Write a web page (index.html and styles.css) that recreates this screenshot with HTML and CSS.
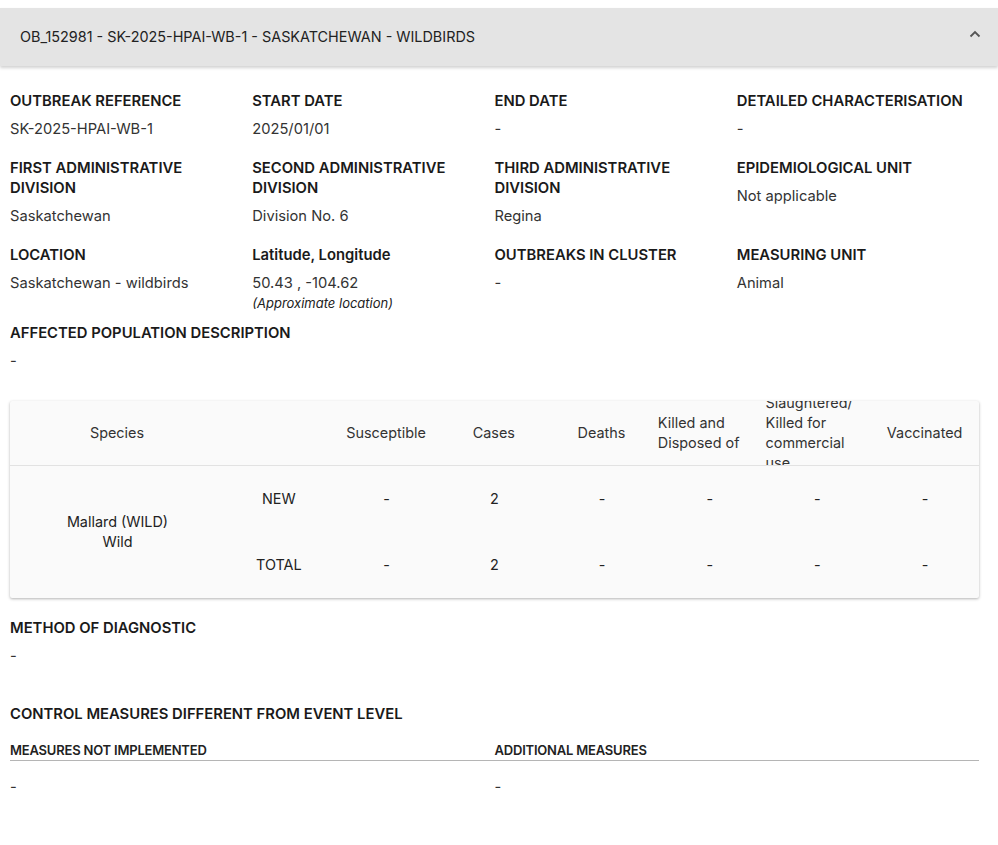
FILE: index.html
```html
<!DOCTYPE html>
<html lang="en">
<head>
  <meta charset="UTF-8">
  <meta name="viewport" content="width=device-width, initial-scale=1.0">
  <title>OB_152981 - Outbreak details</title>
  <link rel="stylesheet" href="styles.css">
</head>
<body>
  <div class="panel">
    <div class="panel-header">
      <span class="panel-title">OB_152981 - SK-2025-HPAI-WB-1 - SASKATCHEWAN - WILDBIRDS</span>
      <svg class="chevron" width="12" height="8" viewBox="0 0 12 8">
        <polyline points="1.5,6.5 6,2 10.5,6.5" fill="none" stroke="#555" stroke-width="1.8"/>
      </svg>
    </div>

    <div class="panel-body">
      <div class="fields">
        <div class="field">
          <div class="label">OUTBREAK REFERENCE</div>
          <div class="value">SK-2025-HPAI-WB-1</div>
        </div>
        <div class="field">
          <div class="label">START DATE</div>
          <div class="value">2025/01/01</div>
        </div>
        <div class="field">
          <div class="label">END DATE</div>
          <div class="value">-</div>
        </div>
        <div class="field">
          <div class="label">DETAILED CHARACTERISATION</div>
          <div class="value">-</div>
        </div>

        <div class="field">
          <div class="label">FIRST ADMINISTRATIVE DIVISION</div>
          <div class="value">Saskatchewan</div>
        </div>
        <div class="field">
          <div class="label">SECOND ADMINISTRATIVE DIVISION</div>
          <div class="value">Division No. 6</div>
        </div>
        <div class="field">
          <div class="label">THIRD ADMINISTRATIVE DIVISION</div>
          <div class="value">Regina</div>
        </div>
        <div class="field">
          <div class="label">EPIDEMIOLOGICAL UNIT</div>
          <div class="value">Not applicable</div>
        </div>

        <div class="field">
          <div class="label">LOCATION</div>
          <div class="value">Saskatchewan - wildbirds</div>
        </div>
        <div class="field">
          <div class="label">Latitude, Longitude</div>
          <div class="value">50.43 , -104.62</div>
          <div class="note">(Approximate location)</div>
        </div>
        <div class="field">
          <div class="label">OUTBREAKS IN CLUSTER</div>
          <div class="value">-</div>
        </div>
        <div class="field">
          <div class="label">MEASURING UNIT</div>
          <div class="value">Animal</div>
        </div>
      </div>

      <div class="section first">
        <div class="label">AFFECTED POPULATION DESCRIPTION</div>
        <div class="value">-</div>
      </div>

      <div class="species-table">
        <div class="th">Species</div>
        <div class="th"></div>
        <div class="th">Susceptible</div>
        <div class="th">Cases</div>
        <div class="th">Deaths</div>
        <div class="th">Killed and Disposed of</div>
        <div class="th">Slaughtered/ Killed for commercial use</div>
        <div class="th">Vaccinated</div>

        <div class="td species">Mallard (WILD)<br>Wild</div>
        <div class="td">NEW</div>
        <div class="td">-</div>
        <div class="td">2</div>
        <div class="td">-</div>
        <div class="td">-</div>
        <div class="td">-</div>
        <div class="td">-</div>

        <div class="td">TOTAL</div>
        <div class="td">-</div>
        <div class="td">2</div>
        <div class="td">-</div>
        <div class="td">-</div>
        <div class="td">-</div>
        <div class="td">-</div>
      </div>

      <div class="section diagnostic">
        <div class="label">METHOD OF DIAGNOSTIC</div>
        <div class="value">-</div>
      </div>

      <div class="section measures">
        <div class="label">CONTROL MEASURES DIFFERENT FROM EVENT LEVEL</div>
        <div class="measures-grid">
          <div class="mh">MEASURES NOT IMPLEMENTED</div>
          <div class="mh">ADDITIONAL MEASURES</div>
          <div class="value">-</div>
          <div class="value">-</div>
        </div>
      </div>
    </div>
  </div>
</body>
</html>
```
FILE: styles.css
```css
body {
  margin: 0;
  font-family: Inter, "Noto Sans", sans-serif;
  color: #222;
  background: #fff;
}

.panel {
  padding-top: 8px;
}

.panel-header {
  height: 58px;
  background-color: #e4e4e4;
  box-shadow: 0 2px 3px rgba(0, 0, 0, 0.18);
  display: flex;
  align-items: center;
  justify-content: space-between;
  padding: 0 17px 0 20px;
}
.panel-title {
  font-size: 14.4px;
  color: #222;
  padding-bottom: 2px;
}
.chevron {
  margin-bottom: 7px;
}

.panel-body {
  padding: 25px 19px 40px 10px;
}

.fields {
  display: grid;
  grid-template-columns: repeat(4, 1fr);
  row-gap: 19px;
}
.field {
  padding-right: 10px;
}

.label {
  font-size: 14.8px;
  font-weight: 600;
  line-height: 20px;
  color: #1a1a1a;
}
.value {
  font-size: 14.7px;
  line-height: 20px;
  color: #333;
  margin-top: 8px;
}
.note {
  font-size: 13px;
  font-style: italic;
  line-height: 20px;
  color: #222;
}

.section.first {
  margin-top: 10px;
}

/* species counts card */
.species-table {
  margin-top: 30px;
  display: grid;
  grid-template-columns: 215px repeat(7, 1fr);
  grid-template-rows: 65px 66px 66px;
  background-color: #fafafa;
  box-shadow: 0 1px 3px rgba(0, 0, 0, 0.3);
  border-radius: 2px;
  font-size: 14.4px;
  color: #222;
}
.th {
  display: flex;
  align-items: center;
  justify-content: center;
  padding: 0 3px 0 2px;
  line-height: 20px;
  overflow: hidden;
  border-bottom: 1px solid #e2e2e2;
  color: #333;
}
.td {
  display: flex;
  align-items: center;
  justify-content: center;
  line-height: 20px;
}
.td.species {
  grid-row: span 2;
  display: block;
  text-align: center;
  align-self: center;
}

.diagnostic {
  margin-top: 20px;
}
.measures {
  margin-top: 38px;
}
.measures-grid {
  display: grid;
  grid-template-columns: 1fr 1fr;
  margin-top: 17px;
}
.mh {
  font-size: 13px;
  font-weight: 600;
  letter-spacing: -0.2px;
  line-height: 18px;
  padding-bottom: 1px;
  border-bottom: 1px solid #b5b5b5;
}
.measures-grid .value {
  margin-top: 16px;
}
```
